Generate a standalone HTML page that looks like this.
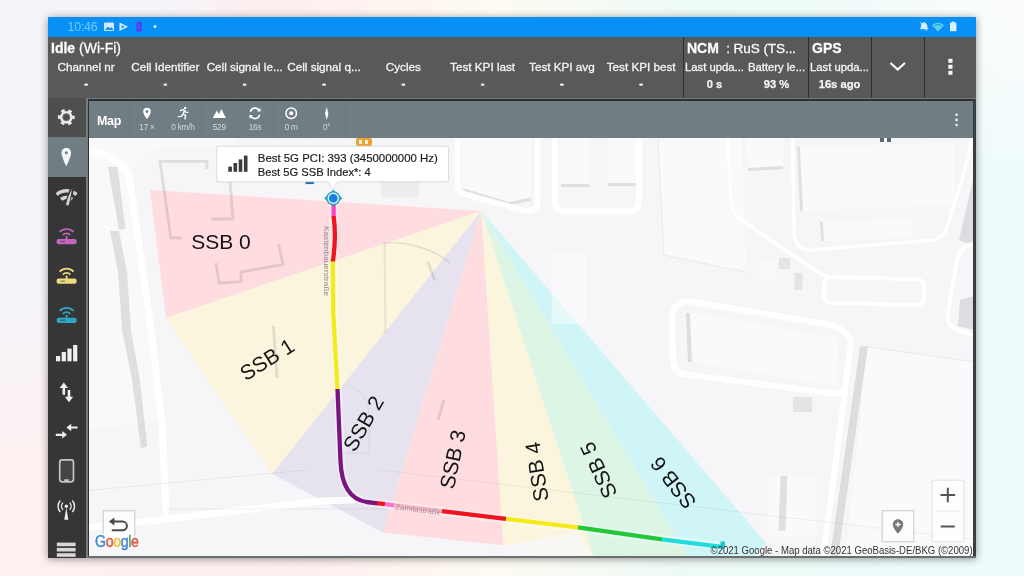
<!DOCTYPE html>
<html lang="en">
<head>
<meta charset="utf-8">
<title>Map - SSB coverage</title>
<style>
html,body{margin:0;padding:0;}
body{width:1024px;height:576px;overflow:hidden;position:relative;font-family:"Liberation Sans",sans-serif;
 background:
  radial-gradient(ellipse 260px 470px at 0 0, #f5f4fa 0%, #f5f4fa 62%, rgba(245,244,250,0) 100%),
  radial-gradient(ellipse 220px 200px at 1024px 0, #fcfcfc 0%, rgba(252,252,252,0) 100%),
  linear-gradient(90deg, #fef1f1 0%, #fdeeee 28%, #fefbf2 48%, #eefaf6 66%, #edfbfc 100%);}
.abs{position:absolute;}
#frame{filter:blur(.45px);position:absolute;left:48px;top:17px;width:928px;height:541px;background:#363636;box-shadow:0 1px 8px rgba(0,0,0,.42);overflow:hidden;}
#status{position:absolute;left:0;top:0;width:928px;height:20px;background:#0690f8;}
#hdr{position:absolute;left:0;top:20px;width:928px;height:61px;background:#58595b;color:#fff;-webkit-text-stroke:.3px #f4f4f4;}
.col{position:absolute;top:23px;width:80px;text-align:center;font-size:11.7px;line-height:14px;color:#f4f4f4;white-space:nowrap;}
.col b{display:block;font-weight:bold;line-height:15px;position:relative;top:2px;font-size:11.2px;-webkit-text-stroke:.5px #f4f4f4;}
#side{position:absolute;left:0;top:81px;width:40px;height:460px;background:#363636;}
#mapwrap{position:absolute;left:40px;top:83px;width:886px;height:457px;background:#f3f3f5;overflow:hidden;}
#tbar{position:absolute;left:0;top:0;width:886px;height:38px;background:#707d82;color:#fff;}
.tl{top:22.3px;width:36px;text-align:center;font-size:8.3px;line-height:10px;color:#d2d9dd;white-space:nowrap;letter-spacing:-.25px;}
#map{position:absolute;left:0;top:38px;width:886px;height:419px;}
</style>
</head>
<body>
<div id="frame">
  <div id="status">
    <span class="abs" style="left:19.5px;top:3px;font-size:12.4px;line-height:14px;color:#70ccfa;letter-spacing:-0.2px;">10:46</span>
    <svg class="abs" style="left:0;top:0" width="928" height="20" viewBox="48 17 928 20">
      <rect x="104" y="22.5" width="10" height="8.5" rx="1" fill="#cfeaff"/><path d="M105 30l3-3.5 2 2 1.5-1.5 2 3z" fill="#0690f8"/>
      <path d="M119.5 22.5l8.5 4.3-8.5 4.3z" fill="#d8eeff"/><path d="M121.5 25.2l3.2 1.6-3.2 1.6z" fill="#0690f8"/>
      <rect x="136.6" y="22" width="5" height="9.6" rx="1" fill="#6a2df5"/><rect x="138" y="24" width="2.2" height="5.6" fill="#3a5ff0"/>
      <circle cx="155" cy="26.5" r="1.5" fill="#d8f0ff"/>
      <path d="M920.5 22.2l6.5 8.6M921.3 27.5c0-3 1-4.6 2.9-4.8 1.8 .2 2.8 1.8 2.8 4.8l1 1.2h-7.6z" fill="#d8eeff" stroke="#d8eeff" stroke-width="1"/>
      <path d="M932 25.2c3.4-3.4 8.6-3.4 12 0l-6 6.3z" fill="#5fd0e8"/><path d="M934.5 26c2-1.8 5-1.8 7 0" stroke="#0690f8" stroke-width="1" fill="none"/>
      <rect x="950" y="22.6" width="6.4" height="8.6" fill="#d6f2ff"/><rect x="951.8" y="21.6" width="2.8" height="1.4" fill="#d6f2ff"/>
    </svg>
  </div>
  <div id="hdr">
    <div class="abs" style="left:3px;top:3px;font-size:14px;line-height:16px;white-space:nowrap;"><b>Idle</b> (Wi-Fi)</div>
    <div class="col" style="left:-1.9px">Channel nr<b>-</b></div>
    <div class="col" style="left:77.4px">Cell Identifier<b>-</b></div>
    <div class="col" style="left:156.7px">Cell signal le...<b>-</b></div>
    <div class="col" style="left:236.0px">Cell signal q...<b>-</b></div>
    <div class="col" style="left:315.3px">Cycles<b>-</b></div>
    <div class="col" style="left:394.6px">Test KPI last<b>-</b></div>
    <div class="col" style="left:473.9px">Test KPI avg<b>-</b></div>
    <div class="col" style="left:553.2px">Test KPI best<b>-</b></div>
    <div class="abs" style="left:634.5px;top:0;width:1.5px;height:61px;background:#2f2f2f"></div>
    <div class="abs" style="left:759.5px;top:0;width:1.5px;height:61px;background:#2f2f2f"></div>
    <div class="abs" style="left:822.5px;top:0;width:1.5px;height:61px;background:#2f2f2f"></div>
    <div class="abs" style="left:875.5px;top:0;width:1.5px;height:61px;background:#2f2f2f"></div>
    <div class="abs" style="left:639px;top:3px;font-size:14px;line-height:16px;white-space:nowrap;"><b>NCM</b><span style="font-size:13.6px;letter-spacing:-.1px">&nbsp; : RuS (TS...</span></div>
    <div class="col" style="left:635.5px;width:62px;font-size:11.3px;">Last upda...<b style="top:3.1px;-webkit-text-stroke:.25px #f4f4f4">0 s</b></div>
    <div class="col" style="left:697.5px;width:62px;font-size:11.3px;">Battery le...<b style="top:3.1px;-webkit-text-stroke:.25px #f4f4f4">93 %</b></div>
    <div class="abs" style="left:764px;top:3px;font-size:14px;line-height:16px;white-space:nowrap;"><b>GPS</b></div>
    <div class="col" style="left:760.5px;width:62px;font-size:11.3px;">Last upda...<b style="top:3.1px;-webkit-text-stroke:.25px #f4f4f4">16s ago</b></div>
    <svg class="abs" style="left:0;top:0" width="928" height="61" viewBox="48 37 928 61">
      <path d="M890.5 63l7.2 6.6 7.2-6.6" fill="none" stroke="#fff" stroke-width="2"/>
      <rect x="948.3" y="58.8" width="4.2" height="4" fill="#f4f4f4"/><rect x="948.3" y="64.8" width="4.2" height="4" fill="#f4f4f4"/><rect x="948.3" y="70.8" width="4.2" height="4" fill="#f4f4f4"/>
    </svg>
  </div>
  <div id="side">
    <div class="abs" style="left:0;top:0;width:38px;height:39px;background:#4e4e4e"></div>
    <div class="abs" style="left:0;top:39px;width:38px;height:39.5px;background:#707d82"></div>
    <svg class="abs" style="left:0;top:0" width="40" height="460" viewBox="48 98 40 460">
      <!-- gear -->
      <g transform="translate(66.3 117.2)">
        <circle r="6.3" fill="#ececec"/>
        <circle r="7.1" fill="none" stroke="#ececec" stroke-width="2.6" stroke-dasharray="3.6 3.835" stroke-dashoffset="1.8"/>
        <circle r="3.700" fill="#4e4e4e"/><circle r="3.700" fill="none" stroke="#8a8a8a" stroke-width=".8"/>
      </g>
      <!-- pin -->
      <path transform="translate(66.3 157.3)" d="M0 -9.3c-2.9 0-4.8 2.1-4.8 4.9 0 3.7 4.8 13.4 4.8 13.4s4.8-9.7 4.8-13.4c0-2.8-1.9-4.9-4.8-4.9zm0 6.2a1.5 1.5 0 1 1 0-3 1.5 1.5 0 0 1 0 3z" fill="#f4f6f7" fill-rule="evenodd"/>
      <!-- wifi crossed -->
      <g transform="translate(66.6 196.5)">
        <path d="M-11 -3.2c6.4-5.6 15.6-5.6 22 0l-2.2 2.6c-5.2-4.4-12.4-4.4-17.6 0z" fill="#d4d4d4"/>
        <path d="M-6.6 1.6c3.9-3.2 9.300-3.200 13.200 0l-2.200 2.600c-2.600-2.100-6.200-2.100-8.800 0z" fill="#d4d4d4"/>
        <path d="M5.800 -8.400l-5.800 17.400" stroke="#3c3c3c" stroke-width="4.600"/>
        <path d="M5.300 -7.400c-2.500 5-4.600 10-5.800 15.200 0 1.200 2.400 1.600 2.800 .2 1-4.400 2.200-9.400 3-15.400z" fill="#d4d4d4"/>
      </g>
      <g transform="translate(66.6 235.4)" color="#c766bd">
        <path d="M-7 -3.4c4-4 10-4 14 0" fill="none" stroke="currentColor" stroke-width="1.7"/>
        <path d="M-3.8 -.4c2.2-2.2 5.4-2.2 7.6 0" fill="none" stroke="currentColor" stroke-width="1.7"/>
        <path d="M0 .6v4.4" stroke="currentColor" stroke-width="1.8"/>
        <rect x="-10" y="3.6" width="20" height="5.2" rx="2" fill="currentColor"/>
        <rect x="-6.4" y="5.4" width="5" height="1.4" rx=".7" fill="#3a3a3a" opacity=".55"/>
      </g>
      <g transform="translate(66.6 275)" color="#eedb7c">
        <path d="M-7 -3.4c4-4 10-4 14 0" fill="none" stroke="currentColor" stroke-width="1.7"/>
        <path d="M-3.8 -.4c2.2-2.2 5.4-2.2 7.6 0" fill="none" stroke="currentColor" stroke-width="1.7"/>
        <path d="M0 .6v4.4" stroke="currentColor" stroke-width="1.8"/>
        <rect x="-10" y="3.6" width="20" height="5.2" rx="2" fill="currentColor"/>
        <rect x="-6.4" y="5.4" width="5" height="1.4" rx=".7" fill="#3a3a3a" opacity=".55"/>
      </g>
      <g transform="translate(66.6 314.2)" color="#2ea6c4">
        <path d="M-7 -3.4c4-4 10-4 14 0" fill="none" stroke="currentColor" stroke-width="1.7"/>
        <path d="M-3.8 -.4c2.2-2.2 5.4-2.2 7.6 0" fill="none" stroke="currentColor" stroke-width="1.7"/>
        <path d="M0 .6v4.4" stroke="currentColor" stroke-width="1.8"/>
        <rect x="-10" y="3.6" width="20" height="5.2" rx="2" fill="currentColor"/>
        <rect x="-6.4" y="5.4" width="5" height="1.4" rx=".7" fill="#3a3a3a" opacity=".55"/>
      </g>
      <!-- signal bars -->
      <g fill="#efefef"><rect x="56" y="356" width="4.200" height="5.300"/><rect x="61.700" y="352" width="4.200" height="9.300"/><rect x="67.400" y="348.600" width="4.200" height="12.700"/><rect x="73.100" y="345" width="4.200" height="16.300"/></g>
      <!-- up/down arrows -->
      <g fill="#efefef">
        <path d="M63.800 382.600l4.200 5.400h-2.900v6.800h-2.600v-6.800h-2.900z"/>
        <path d="M69 402.200l-4.200-5.400h2.900v-6.800h2.600v6.800h2.900z"/>
      </g>
      <!-- left/right arrows -->
      <g fill="#efefef">
        <path d="M66.400 427.500l4.800-3.800v2.700h6.400v2.200h-6.400v2.700z"/>
        <path d="M67 434.800l-4.800-3.800v2.700h-6.400v2.200h6.400v2.700z"/>
      </g>
      <!-- phone -->
      <rect x="59.700" y="459.800" width="13.800" height="22" rx="2.600" fill="#444" stroke="#c4c4c4" stroke-width="1.700"/>
      <rect x="64" y="479.300" width="5.200" height="1.600" rx=".8" fill="#c4c4c4"/>
      <!-- antenna -->
      <g transform="translate(66.300 509)" fill="none" stroke="#efefef">
        <circle cy="-2.800" r="1.700" fill="#efefef" stroke="none"/>
        <path d="M0 -1.600l-2 12.400h4z" fill="#efefef" stroke="none"/>
        <path d="M-3.400 -6.400c-1.800 2-1.800 5.200 0 7.200M3.400 -6.400c1.800 2 1.800 5.200 0 7.200" stroke-width="1.400"/>
        <path d="M-6 -8.600c-3 3.200-3 8.400 0 11.600M6 -8.600c3 3.200 3 8.400 0 11.600" stroke-width="1.400"/>
      </g>
      <!-- menu -->
      <g fill="#d8d8d8"><rect x="56.800" y="542.600" width="18.800" height="3.600"/><rect x="56.800" y="547.900" width="18.800" height="3.600"/><rect x="56.800" y="553.200" width="18.800" height="3.600"/></g>
    </svg>
  </div>
  <div id="mapwrap">
    <div id="map">
      <svg class="abs" style="left:0;top:0" width="886" height="419" viewBox="88 138 886 419" id="msvg">
        <rect x="88" y="138" width="886" height="419" fill="#f6f6f9"/>
        
        <!-- sectors -->
        <g id="sectors">
          <polygon points="150,190 481.3,211 166,318" fill="#ffdce0"/>
          <polygon points="166,318 481.3,211 272,474" fill="#fbf5dd"/>
          <polygon points="272,474 481.3,211 383,532.500" fill="#e6e3ef"/>
          <polygon points="383,532.500 481.3,211 503.400,545.300" fill="#ffdce0"/>
          <polygon points="503.400,545.300 481.3,211 594,557 560,553" fill="#fbf5dd"/>
          <polygon points="504.500,546 577,531.500 593,556 530,556" fill="#f8f7f8" fill-opacity=".85"/>
          <polygon points="594,557 481.3,211 690.500,560 600,560" fill="#ddf5e4"/>
          <polygon points="690.500,560 481.3,211 766,543 745,566" fill="#cff5f7"/>
        </g>
        <!-- map detail overlay -->
        <g id="det" fill="none" stroke-linecap="round" stroke-linejoin="round">
          <!-- light buildings -->
          <g fill="#ffffff" fill-opacity=".45" stroke="none">
            <polygon points="88,138 236,138 236,146 150,150 132,170 150,322 160,420 88,430" fill-opacity=".3"/>
            <polygon points="462.5,138 531,138 531,200 509,205 462.5,191"/>
            <rect x="561" y="138" width="28" height="48"/><rect x="608" y="138" width="29.500" height="47"/>
            <polygon points="658,138 742,138 746,272 664,255"/>
            <rect x="551.500" y="253.600" width="34.500" height="70"/>
            <polygon points="797,147 953,143 956,205 800,211"/>
            <polygon points="820,222 911,218 912,238 821,241"/>
            <polygon points="868,347 974,362 974,557 845,557"/>
            <polygon points="688,312 838,338 836,386 690,362"/>
            <rect x="759" y="260" width="17" height="20"/><polygon points="746,138 783,138 783,168 748,170"/>
            <rect x="767" y="476" width="50" height="60"/>
                      </g>
          <!-- building shadows -->
          <g fill="#000" fill-opacity=".10" stroke="none">
            <polygon points="108,167 117.500,167 125.500,228.600 119,230"/>
            <polygon points="110,231 119,231 127,272 131,330 139.500,378 147.400,446.700 141,448 131.700,378 122,330 118,272"/>
            <polygon points="860,346.500 867.800,346.500 838,557 830,557"/>
            <polygon points="462.500,188 509,202 531,197.500 531,200.500 509,205.500 462.500,191.500"/>
            <rect x="561" y="184" width="28" height="3"/><rect x="608" y="183" width="29.500" height="3"/>
            <polygon points="797,147 800,147 803,211 800,211"/>
            <polygon points="820,222 823,222 824,241 821,241"/>
            <polygon points="960,300 974,296 974,330 958,326"/>
            <polygon points="974,176 959,240 974,246"/>
            <rect x="779.500" y="476" width="7" height="55" transform="rotate(2 783 503)"/>
            <rect x="793" y="397" width="19" height="15" fill-opacity=".07"/>
            <polygon points="686,313 690,313 692,362 688,362"/>
            <rect x="381" y="182" width="38" height="15" fill-opacity=".035"/><rect x="779" y="258" width="11" height="11" fill-opacity=".07"/><rect x="794.500" y="273" width="8" height="17" fill-opacity=".07"/><polygon points="748,168 783,166 783,169 748,171"/>
          </g>
          <!-- white roads -->
          <g stroke="#fff" stroke-opacity=".92">
            <path d="M88 150c26 6 40 16 42 32l20 140 12 100 4 90" stroke-width="7"/>
            <path d="M88 528l234-27 30-1" stroke-width="7"/>
            <path d="M333.600 192v70l.400 50 4 78 3 72c1 22 8 37 26 40l360 45" stroke-width="8" stroke-opacity=".4"/>
            <path d="M457.800 138v46c0 6 3 9 8 10.500l58 16c8 2 13.700-2 13.700-9V138" stroke-width="6"/>
            <path d="M554.700 138v62c0 8 4 11.400 11 11.400h62c8 0 11.300-4 11.300-11.400V138" stroke-width="6"/>
            <path d="M728 138l3 62c.500 10 4 16 12 21l66 45c6 4 10 8 17 10" stroke-width="3.600"/>
            <path d="M792.500 138l1.500 92c.500 14 6 20.500 18 20l118-9.500c10-1 15-6 18-16l16-52c4-13 6-22 8-34" stroke-width="3.600"/>
            <rect x="824" y="278" width="100" height="26" rx="7" stroke-width="4" transform="rotate(1.500 874 291)"/>
            <path d="M974 244c-10 1-15 6-17 16l-9 52c-2 10 2 15 10 18l16 6" stroke-width="4"/>
            <path d="M691 301.500l132 22c18 3 29 10 27.500 24l-5 38c-1 6-5 9-12 8l-148-19c-8-1-12-6-12.500-14l-1-40c0-12 6-21 19-19z" stroke-width="6"/>
            <path d="M845 392l-22 165" stroke-width="6"/>
          </g>
          <!-- outlines -->
          <g stroke="#000" stroke-opacity=".10" stroke-width="2.800" stroke-linecap="butt">
            <path d="M207 169v-7.600H160l10.800 76.600h11"/>
            <path d="M230 181l3 38h-21.600"/>
            <path d="M278.600 244l4.400 20.500-42 7.500v9.700l-22 1.300-3-20"/>
            <path d="M428 262l6.600 18M444 400l-6 20M273.500 326l3.500 52"/>
            <path d="M384 243c22-2 50 6 66 20" stroke-width="1.400"/><path d="M384.500 243l1 90" stroke-width="2" stroke-opacity=".07"/>
          </g>
          <g stroke="#000" stroke-opacity=".06" stroke-width="1">
            <path d="M88 490.500l219-20.500M166 509l220 0M380 470l600 70"/>
            <path d="M658 138l6 117 82 17M868 347l106 15"/>
            <path d="M347 385c14 4 22 14 22 30v38h-30"/>
          </g>
        </g>
        <!-- route -->
        <g id="route" fill="none" stroke-width="4.300" stroke-linecap="butt">
          <path d="M333.600 203v14" stroke="#ff40c8"/>
          <path d="M333.600 216c2 14 2.200 26-.8 46" stroke="#ee1520"/>
          <path d="M332.800 261.500l.4 50 4.300 78" stroke="#f4ea1c"/>
          <path d="M337.500 389l3 72c.8 22 8 38 26 41l11 1.300" stroke="#7a1480"/>
          <path d="M377 503.200l8 1" stroke="#ee1520"/>
          <path d="M385 504.200l9 1.200" stroke="#ff70d0"/>
          <path d="M394 505.400l48 5.800" stroke="#e8a0b0" stroke-opacity=".7"/>
          <path d="M442 511.200l64 7.600" stroke="#ee1520"/>
          <path d="M506 518.800l72 8.600" stroke="#f4ea1c"/>
          <path d="M578 527.400l84 12" stroke="#22c838"/>
          <path d="M662 539.400l62 7.800" stroke="#20dcdc"/>
          <rect x="720.500" y="541.500" width="4.500" height="6" fill="#20c8d4" stroke="none"/>
        </g>
        <!-- labels -->
        <g font-family="Liberation Sans, sans-serif" font-size="21" fill="#141414" text-anchor="middle">
          <text x="221" y="248.600">SSB 0</text>
          <text transform="translate(267 359.300) rotate(-32)" y="7.500">SSB 1</text>
          <text transform="translate(363.200 423.400) rotate(-60)" y="7.500">SSB 2</text>
          <text transform="translate(452.500 459.400) rotate(-78)" y="7.500">SSB 3</text>
          <text transform="translate(536.600 471.900) rotate(-99)" y="7.500">SSB 4</text>
          <text transform="translate(598.400 470.300) rotate(-115)" y="7.500">SSB 5</text>
          <text transform="translate(673 483) rotate(-128)" y="7.500">SSB 6</text>
        </g>
        <!-- street labels -->
        <g font-family="Liberation Sans, sans-serif" font-size="7.500" fill="#8a8a8e">
          <text transform="translate(323.800 226) rotate(90)" textLength="70" lengthAdjust="spacingAndGlyphs">Kastenbauerstraße</text>
          <text transform="translate(395 509.300) rotate(7)" fill="#b08a98" textLength="46" lengthAdjust="spacingAndGlyphs">Zamilastraße</text>
        </g>
        <!-- small POIs -->
        <rect x="356" y="138" width="16" height="8" rx="2" fill="#f0a030"/><rect x="359" y="140" width="3" height="4" fill="#fff6e0"/><rect x="365" y="140" width="3" height="4" fill="#fff6e0"/>
        <rect x="304.500" y="180.500" width="10.500" height="4.500" rx="2" fill="#d8eefa"/><rect x="305.500" y="181.300" width="8.500" height="2.600" rx="1" fill="#1a6cb0"/>
        <rect x="880" y="138" width="4" height="4" fill="#5a6a72"/><rect x="887" y="138" width="4" height="4" fill="#5a6a72"/>
        <!-- marker -->
        <g transform="translate(333.300 198.300)">
          <path d="M-9.200 0l3-2.600v5.200zM9.200 0l-3-2.600v5.200zM0 -8.800l-2.200 2.600h4.400zM0 8.800l-2.200-2.600h4.400z" fill="#2aa2b0"/>
          <circle r="7" fill="#2aa2b0"/>
          <circle r="5.700" fill="#d8f4fa"/>
          <circle r="4.300" fill="#1a80e0"/>
        </g>
        <!-- tooltip -->
        <g>
          <path d="M216.800 146.200h231.600v35.600H337.500l-4.800 8.600-4.800-8.600H216.800z" fill="#fff" stroke="#d4d4d6" stroke-width=".8"/>
          <g fill="#3c3c3c"><rect x="228.300" y="166.600" width="3.600" height="5.200"/><rect x="233.500" y="163" width="3.600" height="8.800"/><rect x="238.700" y="159.400" width="3.600" height="12.400"/><rect x="243.900" y="155.600" width="3.600" height="16.200"/></g>
          <g font-family="Liberation Sans, sans-serif" font-size="11.800" fill="#1c1c1c" stroke="#1c1c1c" stroke-width=".2">
            <text x="257.800" y="162" textLength="180" lengthAdjust="spacingAndGlyphs">Best 5G PCI: 393 (3450000000 Hz)</text>
            <text x="257.800" y="175.700" textLength="113" lengthAdjust="spacingAndGlyphs">Best 5G SSB Index*: 4</text>
          </g>
        </g>
        <!-- back button -->
        <rect x="103.200" y="510.800" width="31.600" height="31" fill="#fdfdfd" stroke="#c8c8ca" stroke-width="1"/>
        <path d="M113 521.600h9.600a4.200 4.200 0 0 1 0 8.600h-10.800" fill="none" stroke="#4a4a4a" stroke-width="2"/>
        <path d="M108.800 521.600l5.600-4v8z" fill="#4a4a4a"/>
        <!-- google logo -->
        <g font-family="Liberation Sans, sans-serif" font-size="16" letter-spacing="-.4">
          <text x="95" y="547.400" fill="#fff" stroke="#fff" stroke-width="3" stroke-opacity=".85" textLength="43.500" lengthAdjust="spacingAndGlyphs">Google</text>
          <text x="95" y="547.400" stroke-width=".55" textLength="43.500" lengthAdjust="spacingAndGlyphs"><tspan fill="#4a8ad0" stroke="#4a8ad0">G</tspan><tspan fill="#e0584c" stroke="#e0584c">o</tspan><tspan fill="#f0c040" stroke="#f0c040">o</tspan><tspan fill="#4a8ad0" stroke="#4a8ad0">g</tspan><tspan fill="#4caa60" stroke="#4caa60">l</tspan><tspan fill="#e0584c" stroke="#e0584c">e</tspan></text>
        </g>
        <!-- zoom + my-location buttons -->
        <rect x="932.200" y="480.200" width="31.600" height="61.600" rx="1.500" fill="#fdfdfd" stroke="#e2e2e4" stroke-width="1"/>
        <path d="M936 511h24" stroke="#e8e8ea" stroke-width="1"/>
        <path d="M940.500 495h14.600M947.800 487.700v14.600M940.800 526.600h14" stroke="#555" stroke-width="2"/>
        <rect x="882.200" y="510.800" width="31.600" height="31" fill="#fdfdfd" stroke="#c8c8ca" stroke-width="1"/>
        <path transform="translate(898 526.500)" d="M0 -7.200c-3.100 0-5.200 2.300-5.200 5.200 0 3.900 5.200 9.200 5.200 9.200s5.200-5.300 5.200-9.200c0-2.900-2.100-5.200-5.200-5.200z" fill="#777"/>
        <path d="M895.400 524.500h5.200M898 521.900v5.200" stroke="#fff" stroke-width="1.300"/>
        <!-- copyright -->
        <text x="972.600" y="553.800" text-anchor="end" font-family="Liberation Sans, sans-serif" font-size="10.600" fill="#333" textLength="262" lengthAdjust="spacingAndGlyphs">©2021 Google - Map data ©2021 GeoBasis-DE/BKG (©2009)</text>
        <!-- OVERLAY -->
      </svg>
    </div>
    <div id="tbar">
      <div class="abs" style="left:9px;top:14px;font-size:12.5px;line-height:14px;font-weight:bold;letter-spacing:-.3px;">Map</div>
      <div class="abs" style="left:41px;top:0;width:1px;height:38px;background:#6a777c"></div>
      <div class="abs" style="left:77px;top:0;width:1px;height:38px;background:#6a777c"></div>
      <div class="abs" style="left:113px;top:0;width:1px;height:38px;background:#6a777c"></div>
      <div class="abs" style="left:149px;top:0;width:1px;height:38px;background:#6a777c"></div>
      <div class="abs" style="left:185px;top:0;width:1px;height:38px;background:#6a777c"></div>
      <div class="abs" style="left:221px;top:0;width:1px;height:38px;background:#6a777c"></div>
      <div class="abs" style="left:257px;top:0;width:1px;height:38px;background:#6a777c"></div>
      <div class="abs tl" style="left:41.0px;">17 ×</div>
      <div class="abs tl" style="left:77.0px;">0 km/h</div>
      <div class="abs tl" style="left:113.3px;">529</div>
      <div class="abs tl" style="left:149.0px;">16s</div>
      <div class="abs tl" style="left:185.2px;">0 m</div>
      <div class="abs tl" style="left:220.7px;">0°</div>
      <svg class="abs" style="left:0;top:0" width="886" height="38" viewBox="88 100 886 38">
        <path transform="translate(147 113.300)" d="M0 -5.600c-2.300 0-3.800 1.700-3.800 3.800 0 2.800 3.800 7.600 3.800 7.600s3.800-4.800 3.800-7.600c0-2.100-1.500-3.800-3.800-3.800zm0 5.300a1.500 1.500 0 1 1 0-3 1.500 1.500 0 0 1 0 3z" fill="#fff" fill-rule="evenodd"/>
        <g transform="translate(183 113)" stroke="#fff" stroke-width="1.400" fill="none" stroke-linecap="round" stroke-linejoin="round">
          <circle cx="2.200" cy="-5" r="1.200" fill="#fff" stroke="none"/>
          <path d="M-2.600 -2.400l2.600-1 1.600 .8-1.400 3.400 2.400 1.600-.6 3.400M.200 .800l-1.800 2.600-3 .200M1.600 -2.600l1.200 1.800 2.200 .200"/>
        </g>
        <path transform="translate(219.300 113.500)" d="M-6.600 4.500l4.200-7.400 2.200 3.600 2.200-5.200 4.600 9z" fill="#fff"/>
        <g transform="translate(255 113.300)" fill="none" stroke="#fff" stroke-width="1.700">
          <path d="M-4.600 -1.600a4.800 4.800 0 0 1 8.600-1.600M4.600 1.600a4.800 4.800 0 0 1-8.600 1.600"/>
          <path d="M5.600 -5.400v3.600h-3.600zM-5.600 5.400v-3.600h3.600z" fill="#fff" stroke="none"/>
        </g>
        <g transform="translate(291.200 113.300)" fill="none" stroke="#fff"><circle r="5.300" stroke-width="1.500"/><circle r="2" fill="#fff" stroke="none"/></g>
        <path transform="translate(326.700 113.500)" d="M0 -6.600l1.700 6.600-1.700 6.600-1.700-6.600z" fill="#fff"/>
        <g fill="#eef2f4"><circle cx="956.500" cy="114.800" r="1.300"/><circle cx="956.500" cy="119.900" r="1.300"/><circle cx="956.500" cy="125" r="1.300"/></g>
      </svg>
    </div>
  </div>
  <div class="abs" style="left:38px;top:80.5px;width:890px;height:1.5px;background:#787a7e"></div>
  <div class="abs" style="left:38px;top:80.5px;width:1.5px;height:461px;background:#787a7e"></div>
  <div class="abs" style="left:39.5px;top:82px;width:889px;height:1.8px;background:#2c3035"></div>
  <div class="abs" style="left:39.5px;top:82px;width:1.5px;height:459px;background:#2c3035"></div>
  <div class="abs" style="left:925.2px;top:82px;width:2.8px;height:459px;background:#3a3e40"></div>
  <div class="abs" style="left:39.5px;top:539px;width:889px;height:2px;background:#6a6e6e"></div>
</div>
</body>
</html>
